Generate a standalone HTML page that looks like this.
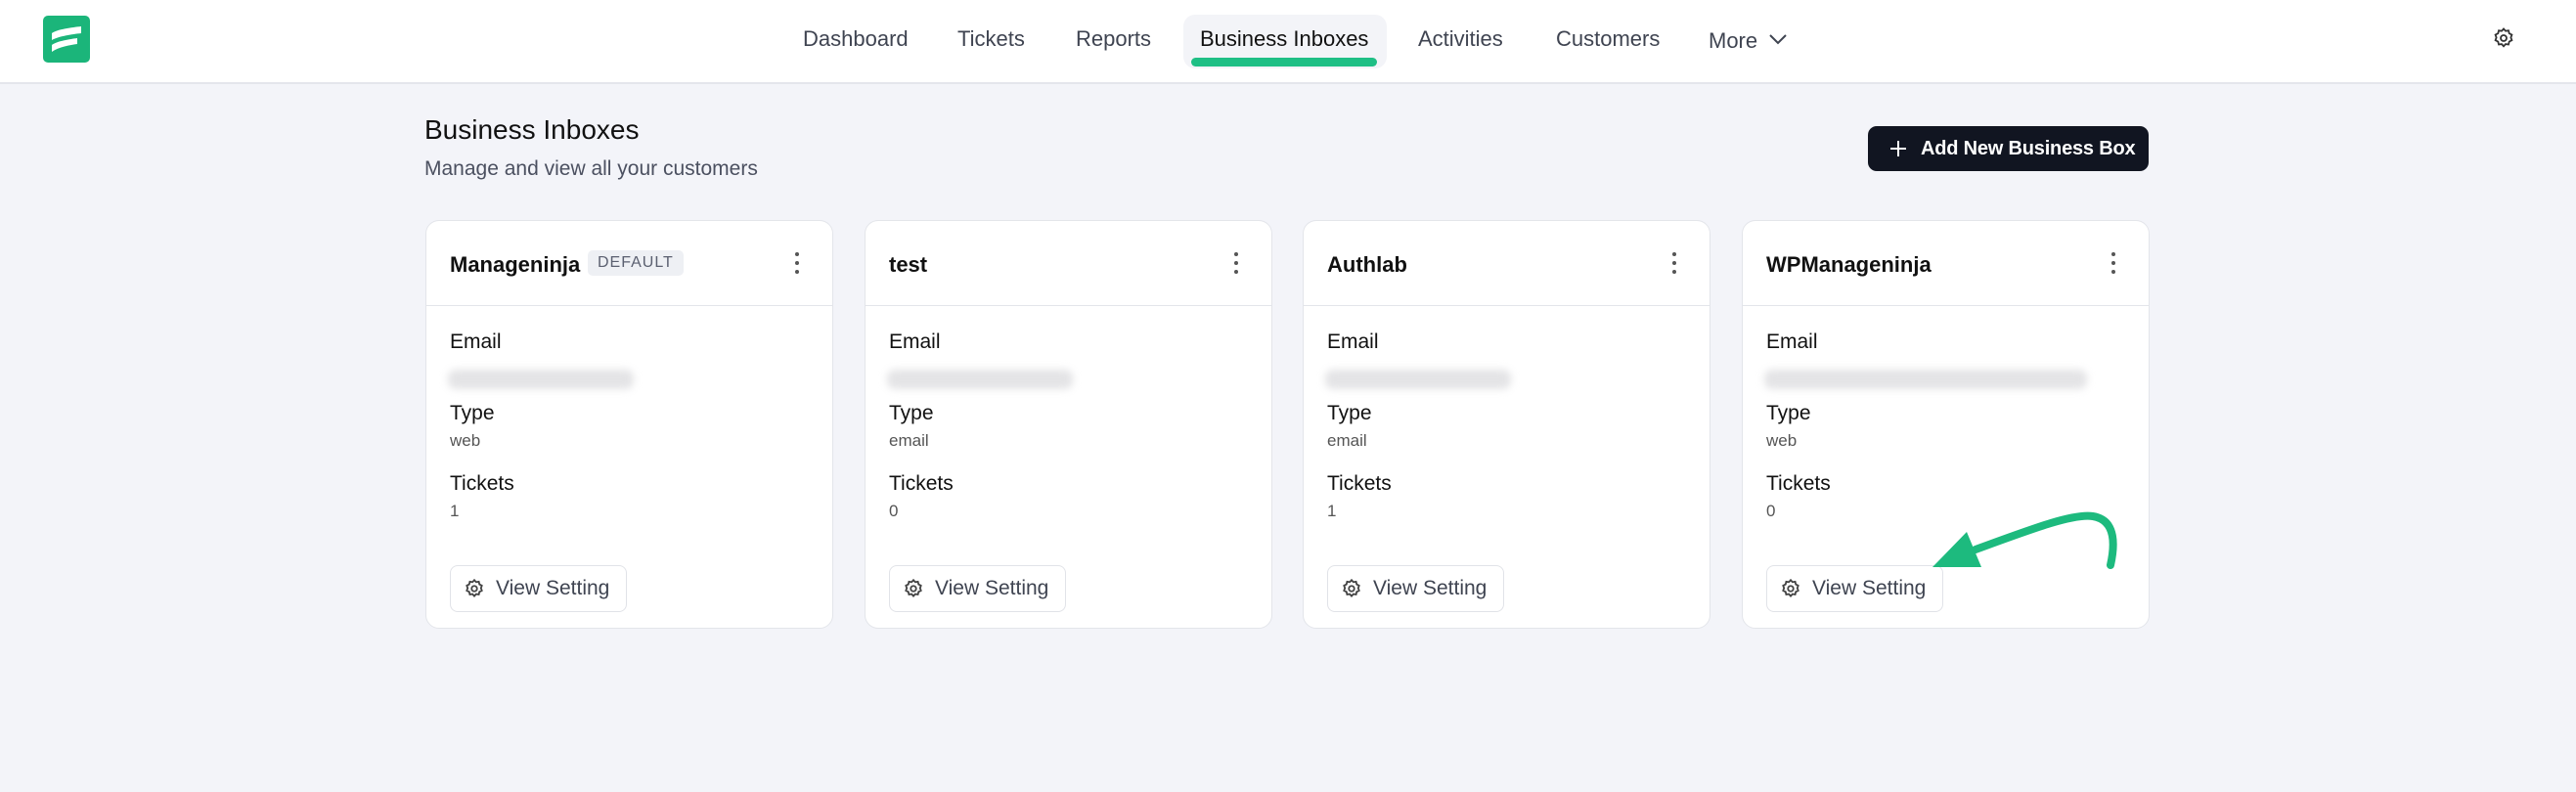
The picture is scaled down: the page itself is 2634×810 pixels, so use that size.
<!DOCTYPE html>
<html><head><meta charset="utf-8"><style>
*{box-sizing:border-box;margin:0;padding:0}
body{width:2634px;height:810px;background:#f3f4f9;font-family:"Liberation Sans",sans-serif;position:relative;overflow:hidden;color:#111}
.hdr{position:absolute;left:0;top:0;width:2634px;height:86px;background:#fff;border-bottom:2px solid #e4e6ec}
.nav{position:absolute;top:27px;font-size:22px;color:#3f4451;white-space:nowrap}
.pill{position:absolute;left:1210px;top:15px;width:208px;height:55px;background:#f3f4f8;border-radius:12px}
.bar{position:absolute;left:1218px;top:59px;width:190px;height:9px;background:#1fbf85;border-radius:5px}
.title{position:absolute;left:434px;top:117px;font-size:28px;color:#111}
.sub{position:absolute;left:434px;top:161px;font-size:21px;color:#4b5060}
.btn{position:absolute;left:1910px;top:129px;width:287px;height:46px;background:#111521;border-radius:9px;color:#fff;font-size:20px;font-weight:bold;line-height:46px;padding-left:54px;white-space:nowrap;letter-spacing:-0.2px}
.card{position:absolute;top:225px;width:417px;height:418px;background:#fff;border:1.5px solid #e3e5ea;border-radius:14px}
.ch{height:87px;border-bottom:1.5px solid #e3e5ea;position:relative}
.ct{position:absolute;left:24px;top:32px;font-size:22px;font-weight:bold}
.dots{position:absolute;right:34px;top:32px;width:4px}
.dots i{display:block;width:4px;height:4px;border-radius:2px;background:#555;margin-bottom:5px}
.lbl{position:absolute;left:24px;font-size:21px;color:#111}
.val{position:absolute;left:24px;font-size:17px;color:#555}
.blur{position:absolute;left:22px;top:152px;height:20px;background:#e4e4e6;filter:blur(4px);border-radius:8px}
.vs{position:absolute;left:24px;top:352px;width:181px;height:48px;border:1.5px solid #e1e3e8;border-radius:8px;font-size:21px;color:#3f4451;line-height:45px;padding-left:46px}
.vs svg{position:absolute;left:13px;top:12px}
.badge{position:absolute;left:165px;top:30px;background:#eef0f4;color:#5b6070;font-size:16px;padding:4px 10px;border-radius:5px;letter-spacing:1px}
</style></head><body>
<div class="hdr">
<svg style="position:absolute;left:44px;top:16px" width="48" height="48" viewBox="0 0 48 48"><rect width="48" height="48" rx="5" fill="#1bb57a"/><path d="M9 18 C14 14 30 12 39 11 L39 18 C30 19 16 21 9 25Z" fill="#fff"/><path d="M9 30 C14 26 28 24 35 23 L35 29 C28 30 16 32 9 37Z" fill="#fff"/></svg>
<div class="pill"></div><div class="bar"></div>
<div class="nav" style="left:821px">Dashboard</div>
<div class="nav" style="left:979px">Tickets</div>
<div class="nav" style="left:1100px">Reports</div>
<div class="nav" style="left:1227px;color:#111">Business Inboxes</div>
<div class="nav" style="left:1450px">Activities</div>
<div class="nav" style="left:1591px">Customers</div>
<div class="nav" style="left:1747px;top:29px">More</div>
<svg style="position:absolute;left:1808px;top:33px" width="20" height="14" viewBox="0 0 20 14"><path d="M2 3 L10 11 L18 3" stroke="#3f4451" stroke-width="2" fill="none"/></svg>
<svg style="position:absolute;left:2548px;top:27px" width="24" height="24" viewBox="0 0 24 24" fill="none" stroke="#333" stroke-width="1.8"><path d="M12 2.5l2 2.2 3-.4.7 2.9 2.7 1.4-1 2.8 1 2.8-2.7 1.4-.7 2.9-3-.4-2 2.2-2-2.2-3 .4-.7-2.9-2.7-1.4 1-2.8-1-2.8 2.7-1.4.7-2.9 3 .4z"/><circle cx="12" cy="12" r="3"/></svg>
</div>
<div class="title">Business Inboxes</div>
<div class="sub">Manage and view all your customers</div>
<div class="btn"><svg style="position:absolute;left:22px;top:14px" width="18" height="18" viewBox="0 0 18 18"><path d="M9 1v16M1 9h16" stroke="#fff" stroke-width="2"/></svg>Add New Business Box</div>

<div class="card" style="left:435px"><div class="ch"><div class="ct">Manageninja</div><div class="badge">DEFAULT</div><div class="dots"><i></i><i></i><i></i></div></div>
<div class="lbl" style="top:112px">Email</div><div class="blur" style="width:190px"></div>
<div class="lbl" style="top:185px">Type</div><div class="val" style="top:215px">web</div>
<div class="lbl" style="top:257px">Tickets</div><div class="val" style="top:287px">1</div>
<div class="vs"><svg width="22" height="22" viewBox="0 0 24 24" fill="none" stroke="#444" stroke-width="2"><path d="M12 2.5l2 2.2 3-.4.7 2.9 2.7 1.4-1 2.8 1 2.8-2.7 1.4-.7 2.9-3-.4-2 2.2-2-2.2-3 .4-.7-2.9-2.7-1.4 1-2.8-1-2.8 2.7-1.4.7-2.9 3 .4z"/><circle cx="12" cy="12" r="3"/></svg>View Setting</div></div>

<div class="card" style="left:884px"><div class="ch"><div class="ct">test</div><div class="dots"><i></i><i></i><i></i></div></div>
<div class="lbl" style="top:112px">Email</div><div class="blur" style="width:190px"></div>
<div class="lbl" style="top:185px">Type</div><div class="val" style="top:215px">email</div>
<div class="lbl" style="top:257px">Tickets</div><div class="val" style="top:287px">0</div>
<div class="vs"><svg width="22" height="22" viewBox="0 0 24 24" fill="none" stroke="#444" stroke-width="2"><path d="M12 2.5l2 2.2 3-.4.7 2.9 2.7 1.4-1 2.8 1 2.8-2.7 1.4-.7 2.9-3-.4-2 2.2-2-2.2-3 .4-.7-2.9-2.7-1.4 1-2.8-1-2.8 2.7-1.4.7-2.9 3 .4z"/><circle cx="12" cy="12" r="3"/></svg>View Setting</div></div>

<div class="card" style="left:1332px"><div class="ch"><div class="ct">Authlab</div><div class="dots"><i></i><i></i><i></i></div></div>
<div class="lbl" style="top:112px">Email</div><div class="blur" style="width:190px"></div>
<div class="lbl" style="top:185px">Type</div><div class="val" style="top:215px">email</div>
<div class="lbl" style="top:257px">Tickets</div><div class="val" style="top:287px">1</div>
<div class="vs"><svg width="22" height="22" viewBox="0 0 24 24" fill="none" stroke="#444" stroke-width="2"><path d="M12 2.5l2 2.2 3-.4.7 2.9 2.7 1.4-1 2.8 1 2.8-2.7 1.4-.7 2.9-3-.4-2 2.2-2-2.2-3 .4-.7-2.9-2.7-1.4 1-2.8-1-2.8 2.7-1.4.7-2.9 3 .4z"/><circle cx="12" cy="12" r="3"/></svg>View Setting</div></div>

<div class="card" style="left:1781px"><div class="ch"><div class="ct">WPManageninja</div><div class="dots"><i></i><i></i><i></i></div></div>
<div class="lbl" style="top:112px">Email</div><div class="blur" style="width:330px"></div>
<div class="lbl" style="top:185px">Type</div><div class="val" style="top:215px">web</div>
<div class="lbl" style="top:257px">Tickets</div><div class="val" style="top:287px">0</div>
<div class="vs"><svg width="22" height="22" viewBox="0 0 24 24" fill="none" stroke="#444" stroke-width="2"><path d="M12 2.5l2 2.2 3-.4.7 2.9 2.7 1.4-1 2.8 1 2.8-2.7 1.4-.7 2.9-3-.4-2 2.2-2-2.2-3 .4-.7-2.9-2.7-1.4 1-2.8-1-2.8 2.7-1.4.7-2.9 3 .4z"/><circle cx="12" cy="12" r="3"/></svg>View Setting</div></div>

<svg style="position:absolute;left:0;top:0" width="2634" height="810"><path d="M2020 562 C2080 540 2120 525 2140 528 C2165 532 2162 560 2158 578" stroke="#1dba7e" stroke-width="8" fill="none" stroke-linecap="round"/><path d="M1976 580 L2011 544 L2026 580Z" fill="#1dba7e"/></svg>
</body></html>
